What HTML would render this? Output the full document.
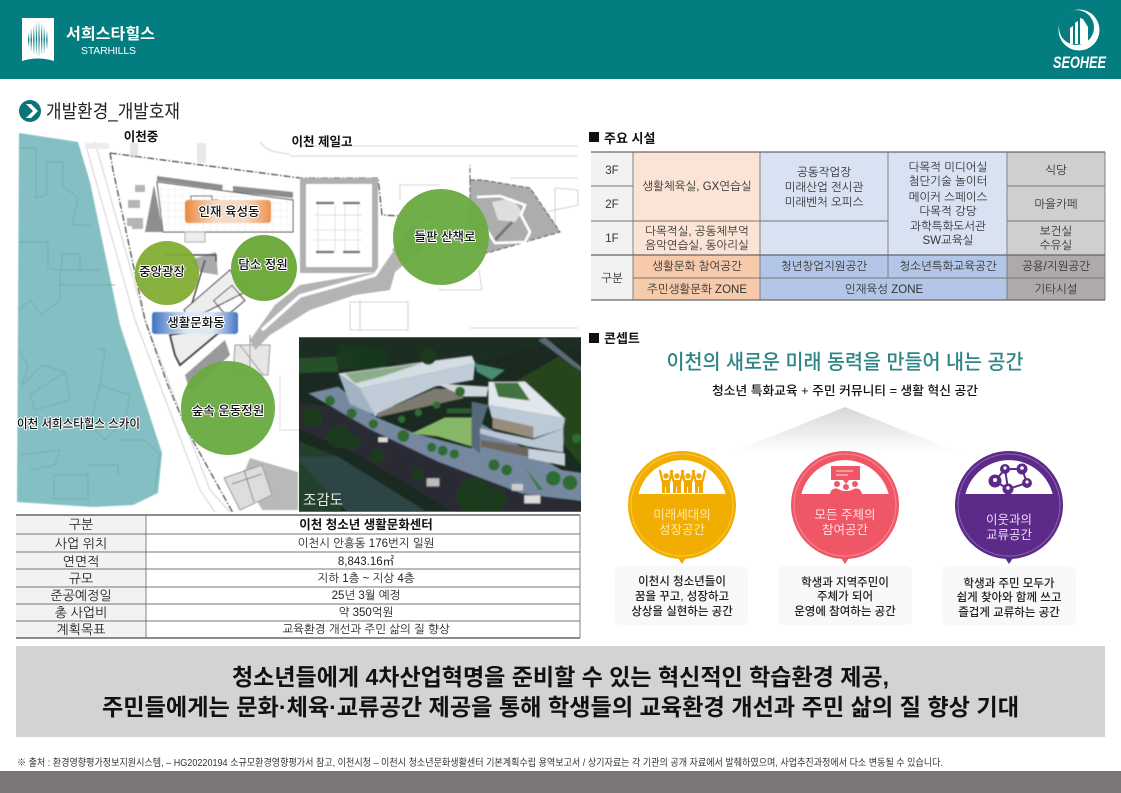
<!DOCTYPE html>
<html lang="ko"><head><meta charset="utf-8"><title>개발환경_개발호재</title>
<style>
html,body{margin:0;padding:0;background:#fff;width:1121px;height:793px;overflow:hidden}
svg{display:block;position:absolute;left:0;top:0}
text{font-family:"Liberation Sans","Noto Sans CJK KR","NanumGothic",sans-serif;fill:#222}
.m{text-anchor:middle}
.t{font-size:11.5px;fill:#333;font-family:"Liberation Sans","NanumGothic","Noto Sans CJK KR",sans-serif}
.i{font-size:11.5px;fill:#222;font-family:"Liberation Sans","NanumGothic","Noto Sans CJK KR",sans-serif}
.il{font-size:13px;fill:#222;font-family:"Liberation Sans","NanumGothic","Noto Sans CJK KR",sans-serif}
.lb{font-size:12.5px;font-weight:500;fill:#111;paint-order:stroke;stroke:#fff;stroke-width:2px;stroke-linejoin:round}
.c{font-size:11.5px;font-weight:500;fill:#222}
.w{font-size:12.5px;fill:#fff}
</style></head><body>
<svg width="1121" height="793" viewBox="0 0 1121 793" xmlns="http://www.w3.org/2000/svg">
<defs>
<linearGradient id="or" x1="0" x2="1" y1="0" y2="0"><stop offset="0" stop-color="#e98a3f"/><stop offset=".35" stop-color="#f6d9c2"/><stop offset=".7" stop-color="#f6d9c2"/><stop offset="1" stop-color="#eb9350"/></linearGradient>
<linearGradient id="bl" x1="0" x2="1" y1="0" y2="0"><stop offset="0" stop-color="#3f72c0"/><stop offset=".4" stop-color="#dde7f5"/><stop offset=".7" stop-color="#dde7f5"/><stop offset="1" stop-color="#4377c4"/></linearGradient>
<linearGradient id="tri" x1="0" x2="0" y1="0" y2="1"><stop offset="0" stop-color="#d6d6d6"/><stop offset=".85" stop-color="#fbfbfb"/><stop offset="1" stop-color="#fff"/></linearGradient>
<linearGradient id="bar" x1="0" x2="0" y1="0" y2="1"><stop offset="0" stop-color="#dff0f0"/><stop offset=".5" stop-color="#08787c"/><stop offset="1" stop-color="#dff0f0"/></linearGradient>
<pattern id="grid" width="7" height="7" patternUnits="userSpaceOnUse"><path d="M7 0H0V7" fill="none" stroke="#d8d8d8" stroke-width=".6"/></pattern>
<filter id="b1"><feGaussianBlur stdDeviation=".6"/></filter>
<filter id="b2" x="-5%" y="-5%" width="110%" height="110%"><feGaussianBlur stdDeviation="2.4"/></filter>
</defs>

<!-- header -->
<rect width="1121" height="79" fill="#047d80"/>
<path d="M22 18H54V61Q38 56 22 61Z" fill="#fff"/>
<g fill="url(#bar)">
<rect x="28" y="33" width="1.3" height="14"/><rect x="30.6" y="29" width="1.3" height="22"/><rect x="33.2" y="26" width="1.3" height="28"/><rect x="35.8" y="23" width="1.3" height="32"/><rect x="38.4" y="22" width="1.3" height="34"/><rect x="41" y="24" width="1.3" height="30"/><rect x="43.6" y="27" width="1.3" height="26"/><rect x="46.2" y="31" width="1.3" height="18"/>
</g>
<text x="66" y="39" font-size="15.5" font-weight="700" style="fill:#fff" textLength="89" lengthAdjust="spacingAndGlyphs">서희스타힐스</text>
<text x="81" y="54" font-size="10.5" style="fill:#fff" textLength="55" lengthAdjust="spacing">STARHILLS</text>

<circle cx="1079" cy="30" r="20.5" fill="#fff"/>
<circle cx="1076.5" cy="27.5" r="17.5" fill="#047d80"/>
<g fill="#fff"><path d="M1070 44V28l3-2v18z"/><path d="M1075 44V23l3-2v23z"/><path d="M1080 44V18l3 1 5 8v17z"/></g>
<text x="1053" y="68" font-size="17" font-weight="700" font-style="italic" style="fill:#fff" textLength="53" lengthAdjust="spacingAndGlyphs">SEOHEE</text>

<!-- title -->
<circle cx="30" cy="111" r="11" fill="#0a7478"/>
<path d="M26 104l7 7-7 7h5l7-7-7-7z" fill="#fff"/>
<text x="46" y="118" font-size="18.5" style="fill:#222" textLength="134" lengthAdjust="spacingAndGlyphs">개발환경_개발호재</text>

<!-- site plan -->
<g filter="url(#b1)">
<path d="M19 133L78 142L90 182L120 325L162 453L158 493L133 505L93 507L17 502Z" fill="#84bfc3"/>
<g fill="none" stroke="#6ea6ab" stroke-width=".7">
<path d="M19 148H36V198L47 195V162H63V186L78 198 72 225H90"/><path d="M19 242H48V268L62 270V254H80V270H60V300L42 315 30 300 19 310"/><path d="M62 270H100M60 285H115"/>
<path d="M98 348L105 350 100 385 130 395 125 420 105 440 90 425 100 385M30 395L65 372 70 400 35 410 30 395"/><path d="M19 455L60 450 55 465 30 470M54 475H88V499H54ZM88 465H118V475M120 440H145L160 455 155 490"/>
<path d="M19 350L28 365 22 385 42 365 65 372"/></g>
<!-- roads -->
<g fill="none" stroke="#c6c6c6" stroke-width=".8">
<path d="M85 142L135 320 200 490 215 512"/><path d="M95 142L145 320 210 490 230 512"/><path d="M300 146H578M290 156H578"/><path d="M260 142C265 150 275 153 290 154"/>
<path d="M490 512L578 440M510 512L578 455M530 512L578 470"/><path d="M510 178H578"/><path d="M470 328H578"/>
<path d="M400 200V185H440M555 188L578 190V205L555 210ZM530 215L555 210 V225L530 220Z"/>
<path d="M440 288V290H482L479 270"/><path d="M350 302H408V330H350ZM360 300V330"/>
</g>
<rect x="85" y="143" width="24" height="6" fill="#ececec"/><rect x="130" y="143" width="8" height="15" fill="#e5e5e5"/><rect x="197" y="143" width="9" height="20" fill="#e8e8e8"/>
<!-- site boundary -->
<path d="M110 153L300 178H378L382 215L440 218M110 153L113 170 145 320 167 383 187 430 233 513" fill="none" stroke="#333" stroke-width="1.1" stroke-dasharray="7 2 1.5 2"/>
<!-- dark top planter -->
<path d="M157 176L223 185L222 190L157 181ZM233 186L293 192V198L233 192Z" fill="#8d8d8d"/>
<path d="M157 182L293 200V232H163Z" fill="#fff" stroke="#444" stroke-width="1"/><path d="M157 182L293 200V232H163Z" fill="url(#grid)"/>
<path d="M154 185L163 232H145Z" fill="#8e8e8e"/>
<path d="M128 200h12v8h-12zM127 218h10v8h-10zM132 218h11v11h-11zM135 185h10v7h-10z" fill="#b5b5b5"/>
<path d="M191 196H212V218H191ZM212 200H218V212" fill="none" stroke="#444"/>
<rect x="185" y="232" width="20" height="10" fill="#eee" stroke="#aaa"/>
<path d="M190 260L216 252 218 275 200 272" fill="#aaa"/><path d="M165 255H216V262M205 260L190 310" stroke="#444" stroke-width="1.4" fill="none"/>
<path d="M184 310L230 270 245 292 190 320Z" fill="#eee" stroke="#333"/>
<rect x="217" y="290" width="24" height="20" fill="url(#grid)" stroke="#444" transform="rotate(-40 230 300)"/>
<path d="M170 335L228 325 180 365 175 355Z" fill="#eee" stroke="#444" stroke-width="2"/>
<path d="M185 375L225 340 230 355 190 392Z" fill="#999"/>
<path d="M235 345H270L268 375H233Z" fill="#e6e6e6" stroke="#999"/><path d="M240 345L263 375M250 335V370" stroke="#999" fill="none"/>
<path d="M250 458L298 472V510H262L243 475Z" fill="#b9b9b9"/>
<path d="M224 478L262 465 272 495 240 510Z" fill="#ddd" stroke="#999"/><path d="M232 484L262 474M244 470L254 502" stroke="#888" fill="none"/>
<!-- parking -->
<path d="M300 178H378V272L360 273H300Z" fill="#b0b0b0"/><rect x="306" y="184" width="66" height="83" fill="#fff"/>
<g stroke="#e1e1e1" fill="none"><path d="M318 205V252M335 205V252M345 205V252M358 205V252M314 215H362M314 230H362M314 240H362"/></g>
<path d="M316 203H334M343 203H360M316 252H334M343 252H360" stroke="#777" stroke-width="2.4"/>
<!-- landscape belt -->
<path d="M250 340L275 305 300 285 377 272 392 250 410 225 440 235 395 272 390 290 355 295 310 310 270 335 255 350Z" fill="#b3b3b3"/>
<path d="M262 330L300 296 375 275 392 250" stroke="#fff" stroke-width="3.5" fill="none"/>
<path d="M280 375V430H300" fill="none" stroke="#ddd" stroke-width="1"/>
<!-- east park -->
<path d="M470 180V165M470 180H482L530 188L560 232L487 253L470 240Z" fill="#adadad" stroke="#444" stroke-width=".9" stroke-dasharray="5 2"/>
<path d="M492 202L512 198 522 212 515 222 498 220Z" fill="#dedede"/>
<path d="M477 197L500 196 525 205 521 215 530 232 525 242 495 243 487 230" fill="none" stroke="#fff" stroke-width="2.6"/>
<path d="M495 240L512 222" stroke="#777" stroke-width="3"/>
</g>

<rect x="185" y="200" width="86" height="23" rx="3" fill="url(#or)" filter="url(#b1)"/>
<rect x="152" y="312" width="86" height="22" rx="3" fill="url(#bl)" filter="url(#b1)"/>
<circle cx="167" cy="273" r="32" fill="#7fab2e" opacity=".93"/>
<circle cx="264" cy="268" r="33" fill="#6ba83a" opacity=".97"/>
<circle cx="441" cy="237" r="48" fill="#6aab43" opacity=".96"/>
<circle cx="228" cy="408" r="47" fill="#6aab43" opacity=".96"/>
<text class="lb m" x="229" y="216">인재 육성동</text>
<text class="lb m" x="196" y="327">생활문화동</text>
<text class="lb m" x="162" y="276">중앙광장</text>
<text class="lb m" x="263" y="269">담소 정원</text>
<text class="lb m" x="445" y="241">들판 산책로</text>
<text class="lb m" x="228" y="415">숲속 운동정원</text>
<text class="lb" x="17" y="428" textLength="123" lengthAdjust="spacingAndGlyphs">이천 서희스타힐스 스카이</text>
<text class="m" x="141" y="141" font-size="12.5" font-weight="700" style="fill:#111">이천중</text>
<text class="m" x="322" y="146" font-size="12.5" font-weight="700" style="fill:#111">이천 제일고</text>

<!-- rendering -->
<g transform="translate(295 330) scale(.33333)">
<rect x="12" y="22" width="846" height="523" fill="#1a2a20"/>
<svg x="12" y="22" width="846" height="523" viewBox="12 22 846 523">
<g filter="url(#b2)">
<path d="M-10 0H880V75L780 40 680 60 540 100 300 100 -10 90Z" fill="#1a2e20"/>
<path d="M0 85L130 80 130 125 0 130Z" fill="#264f2c"/>
<path d="M130 45L280 60 270 110 140 120Z" fill="#17391f"/>
<path d="M750 22L870 120V135L730 30Z" fill="#5a6a78"/>
<path d="M670 150L790 80 870 130V420L805 340 810 260Z" fill="#27441f"/>
<path d="M0 330L130 380 140 560H0Z" fill="#22402a"/>
<path d="M0 380L130 380 420 560H170Z" fill="#2f4444"/>
<path d="M0 215V290L200 380 500 560H870V525L620 465 330 340 100 230Z" fill="#2a2c34"/>
<path d="M40 190L130 170 240 260 360 310 530 355 540 270 800 420 870 430V515L680 490 430 395 230 300Z" fill="#7488a0"/>
<path d="M130 130L530 78 540 100 195 175Z" fill="#d5dde4"/>
<path d="M150 130L380 100 260 140 180 160Z" fill="#8bae89"/>
<path d="M195 175L540 100 535 150 420 170 300 225 240 260 210 215Z" fill="#c0ccd8"/>
<path d="M130 130L195 175 240 255 165 222Z" fill="#a3b3c3"/>
<path d="M245 250L420 175 510 180 505 205 370 235 250 262Z" fill="#7d7a70"/>
<path d="M420 160L580 170 575 200 510 200Z" fill="#d0d7dc"/>
<path d="M540 100L630 120 590 150 545 125Z" fill="#4a8a72"/>
<path d="M580 155L690 155 810 265 580 225Z" fill="#e1e7ec"/>
<path d="M597 158L668 158 705 212 610 200Z" fill="#3f733e"/>
<path d="M580 225L810 265 805 295 715 325 590 262Z" fill="#bccad6"/>
<path d="M592 262L715 290 715 325 592 295Z" fill="#9a8c7c"/>
<path d="M555 295L715 328 805 295 805 368 700 350 555 310Z" fill="#b9c7d4"/>
<path d="M558 330L700 352 700 380 558 350Z" fill="#6d655c"/>
<path d="M700 355L810 370 810 408 700 385Z" fill="#c6d1db"/>
<path d="M530 215L580 225 555 300V370L530 350Z" fill="#56687a"/>
<path d="M350 310L450 262 530 262 530 350 430 320Z" fill="#86b868"/>
<path d="M455 235H528V250H455Z" fill="#2c5c2e"/>
<path d="M680 400L745 480 730 480 695 420Z" fill="#3b7a40"/>
<g fill="#1a3a1f">
<circle cx="52" cy="262" r="30"/><circle cx="130" cy="320" r="34"/><circle cx="170" cy="335" r="24"/><circle cx="245" cy="378" r="20"/><circle cx="367" cy="432" r="18"/><circle cx="540" cy="500" r="55"/><circle cx="600" cy="510" r="35"/><circle cx="400" cy="80" r="24"/><circle cx="150" cy="90" r="26"/>
</g>
<g fill="#2f6c33"><circle cx="235" cy="282" r="14"/><circle cx="170" cy="250" r="15"/><circle cx="105" cy="212" r="15"/><circle cx="410" cy="352" r="14"/><circle cx="443" cy="362" r="15"/><circle cx="478" cy="372" r="14"/><circle cx="597" cy="405" r="17"/><circle cx="635" cy="420" r="16"/><circle cx="775" cy="445" r="22"/><circle cx="825" cy="458" r="22"/><circle cx="320" cy="268" r="11"/><circle cx="370" cy="248" r="11"/><circle cx="425" cy="225" r="11"/><circle cx="495" cy="185" r="15"/><circle cx="325" cy="318" r="18"/><circle cx="845" cy="325" r="14"/></g>
<rect x="250" y="322" width="28" height="14" fill="#ddd"/><rect x="395" y="445" width="38" height="24" fill="#bbb"/><rect x="688" y="496" width="48" height="24" fill="#ddd"/><rect x="650" y="462" width="34" height="20" fill="#ccc"/>
</g>
</svg>
</g>
<text x="303" y="505" font-size="14.5" style="fill:#e8e8e8">조감도</text>

<!-- info table -->
<rect x="16" y="515" width="130" height="123" fill="#f2f2f2"/>
<rect x="146" y="515" width="434" height="123" fill="#fff"/>
<path d="M16 515H580M16 638H580" stroke="#666" stroke-width="1.4"/>
<path d="M16 534H580M16 552H580M16 569H580M16 587H580M16 604H580M16 621H580" stroke="#777" stroke-width=".9"/>
<path d="M146 515V638M580 515V638" stroke="#777" stroke-width=".9"/>
<text class="il m" x="81" y="529">구분</text><text class="il m" x="81" y="548">사업 위치</text><text class="il m" x="81" y="566">연면적</text><text class="il m" x="81" y="583">규모</text><text class="il m" x="81" y="600">준공예정일</text><text class="il m" x="81" y="617">총 사업비</text><text class="il m" x="81" y="634">계획목표</text>
<text class="m" x="366" y="529" font-size="12.5" font-weight="700" style="fill:#111">이천 청소년 생활문화센터</text>
<text class="i m" x="366" y="547">이천시 안흥동 176번지 일원</text><text class="i m" x="366" y="565">8,843.16㎡</text><text class="i m" x="366" y="582">지하 1층 ~ 지상 4층</text><text class="i m" x="366" y="599">25년 3월 예정</text><text class="i m" x="366" y="616">약 350억원</text><text class="i m" x="366" y="633">교육환경 개선과 주민 삶의 질 향상</text>

<!-- facilities -->
<rect x="589" y="132" width="10" height="10" fill="#111"/>
<text x="604" y="143" font-size="13" font-weight="700" style="fill:#111">주요 시설</text>
<rect x="591" y="152" width="42" height="148" fill="#f2f2f2"/>
<rect x="633" y="152" width="127" height="103" fill="#fbe4d5"/>
<rect x="633" y="255" width="127" height="45" fill="#f7caac"/>
<rect x="760" y="152" width="247" height="103" fill="#d9e2f3"/>
<rect x="760" y="255" width="247" height="45" fill="#b4c6e7"/>
<rect x="1007" y="152" width="98" height="103" fill="#d0cece"/>
<rect x="1007" y="255" width="98" height="45" fill="#aeaaaa"/>
<g stroke="#777" stroke-width=".9" fill="none">
<path d="M591 186H633M1007 186H1105M591 221H888M1007 221H1105M633 278H1105"/>
<path d="M633 152V300M760 152V300M888 152V278M1007 152V300M1105 152V300"/>
</g>
<path d="M591 152H1105M591 300H1105M591 255H1105" stroke="#666" stroke-width="1.3"/>
<text class="t m" x="612" y="174">3F</text><text class="t m" x="612" y="208">2F</text><text class="t m" x="612" y="242">1F</text><text class="t m" x="612" y="282">구분</text>
<text class="t m" x="697" y="190">생활체육실, GX연습실</text>
<text class="t m" x="697" y="235">다목적실, 공동체부억</text><text class="t m" x="697" y="249">음악연습실, 동아리실</text>
<text class="t m" x="697" y="270">생활문화 참여공간</text><text class="t m" x="697" y="293">주민생활문화 ZONE</text>
<text class="t m" x="824" y="176">공동작업장</text><text class="t m" x="824" y="191">미래산업 전시관</text><text class="t m" x="824" y="206">미래벤처 오피스</text>
<text class="t m" x="948" y="171">다목적 미디어실</text><text class="t m" x="948" y="185">첨단기술 놀이터</text><text class="t m" x="948" y="201">메이커 스페이스</text><text class="t m" x="948" y="215">다목적 강당</text><text class="t m" x="948" y="230">과학특화도서관</text><text class="t m" x="948" y="244">SW교육실</text>
<text class="t m" x="824" y="270">청년창업지원공간</text><text class="t m" x="948" y="270">청소년특화교육공간</text>
<text class="t m" x="884" y="293">인재육성 ZONE</text>
<text class="t m" x="1056" y="174">식당</text><text class="t m" x="1056" y="208">마을카페</text><text class="t m" x="1056" y="235">보건실</text><text class="t m" x="1056" y="249">수유실</text><text class="t m" x="1056" y="270">공용/지원공간</text><text class="t m" x="1056" y="293">기타시설</text>

<!-- concept -->
<rect x="589" y="333" width="10" height="10" fill="#111"/>
<text x="604" y="343" font-size="13" font-weight="700" style="fill:#111">콘셉트</text>
<text class="m" x="845" y="369" font-size="20.5" font-weight="500" style="fill:#2f8488" textLength="357" lengthAdjust="spacingAndGlyphs">이천의 새로운 미래 동력을 만들어 내는 공간</text>
<text class="m" x="845" y="395" font-size="12.5" font-weight="500" style="fill:#111" textLength="266" lengthAdjust="spacingAndGlyphs">청소년 특화교육 + 주민 커뮤니티 = 생활 혁신 공간</text>
<path d="M845 407L965 455H725Z" fill="url(#tri)"/>

<!-- yellow -->
<path d="M678 558L682 564 686 558Z" fill="#f0a800"/>
<circle cx="682" cy="505" r="54" fill="#f1ad00"/><circle cx="682" cy="505" r="51" fill="none" stroke="#f7c94a" stroke-width="1"/>
<path d="M638.4 494A45 45 0 0 1 725.6 494Z" fill="#fff"/>
<g fill="#f1a800">
<path d="M662 480H670V493H662Z"/><path d="M673 480H681V493H673Z"/><path d="M684 480H692V493H684Z"/><path d="M695 480H703V493H695Z"/>
<circle cx="666" cy="476" r="2.7"/><circle cx="677" cy="476" r="2.7"/><circle cx="688" cy="476" r="2.7"/><circle cx="699" cy="476" r="2.7"/>
</g>
<g fill="none" stroke="#f1a800" stroke-width="2.4" stroke-linecap="round"><path d="M660 471L662.5 481M672 471L669.5 481M671 471L673.5 481M683 471L680.5 481M682 471L684.5 481M694 471L691.5 481M693 471L695.5 481M705 471L702.5 481"/></g>
<path d="M665.5 487V493M676.5 487V493M687.5 487V493M698.5 487V493" stroke="#fff" stroke-width=".9"/>
<text class="w m" x="682" y="519" style="fill:#fde8b3">미래세대의</text><text class="w m" x="682" y="534" style="fill:#fde8b3">성장공간</text>

<!-- red -->
<path d="M841 558L845 564 849 558Z" fill="#ef5a66"/>
<circle cx="845" cy="505" r="54" fill="#ef5766"/><circle cx="845" cy="505" r="51" fill="none" stroke="#f58a93" stroke-width="1"/>
<path d="M801.4 494A45 45 0 0 1 888.6 494Z" fill="#fff"/>
<path d="M831 466H860V480H849L846 484 843 480H831Z" fill="#ef5766"/><path d="M836 471H853M836 475H848" stroke="#fff" stroke-width=".8"/>
<g fill="#ef5766"><circle cx="837" cy="484" r="3"/><circle cx="846" cy="487" r="3"/><circle cx="855" cy="484" r="3"/><path d="M830 494C831 488 836 488 838 489 840 490 842 491 846 491S852 490 854 489C856 488 861 488 862 494Z"/></g>
<text class="w m" x="845" y="519" style="fill:#fde0e3">모든 주체의</text><text class="w m" x="845" y="534" style="fill:#fde0e3">참여공간</text>

<!-- purple -->
<path d="M1005 558L1009 564 1013 558Z" fill="#5d2c8b"/>
<circle cx="1009" cy="505" r="54" fill="#5c2b8a"/><circle cx="1009" cy="505" r="51" fill="none" stroke="#8a62ad" stroke-width="1"/>
<path d="M965.4 494A45 45 0 0 1 1052.6 494Z" fill="#fff"/>
<g fill="none" stroke="#5c2b8a" stroke-width="2"><path d="M995 481L1005 469 1022 469 1027 483 1008 489 995 481M1005 469L1008 489"/></g>
<g fill="#5c2b8a"><circle cx="995" cy="481" r="6.5"/><circle cx="1005" cy="469" r="5"/><circle cx="1022" cy="469" r="5.5"/><circle cx="1027" cy="483" r="5"/><circle cx="1008" cy="489" r="5.5"/></g>
<g fill="#fff"><circle cx="995" cy="480" r="2"/><circle cx="1005" cy="468" r="1.6"/><circle cx="1022" cy="468" r="1.8"/><circle cx="1027" cy="482" r="1.6"/><circle cx="1008" cy="488" r="1.8"/></g>
<text class="w m" x="1009" y="524" style="fill:#e8ddf1">이웃과의</text><text class="w m" x="1009" y="539" style="fill:#e8ddf1">교류공간</text>

<rect x="615" y="566" width="133" height="59" rx="6" fill="#f8f8f8"/>
<rect x="778" y="566" width="134" height="59" rx="6" fill="#f8f8f8"/>
<rect x="942" y="566" width="134" height="59" rx="6" fill="#f8f8f8"/>
<text class="c m" x="682" y="585">이천시 청소년들이</text><text class="c m" x="682" y="600">꿈을 꾸고, 성장하고</text><text class="c m" x="682" y="615">상상을 실현하는 공간</text>
<text class="c m" x="845" y="586">학생과 지역주민이</text><text class="c m" x="845" y="600">주체가 되어</text><text class="c m" x="845" y="615">운영에 참여하는 공간</text>
<text class="c m" x="1009" y="587">학생과 주민 모두가</text><text class="c m" x="1009" y="601">쉽게 찾아와 함께 쓰고</text><text class="c m" x="1009" y="616">즐겁게 교류하는 공간</text>

<!-- bottom band -->
<rect x="16" y="646" width="1089" height="91" fill="#d1d4d3"/>
<text class="m" x="560.5" y="685" font-size="23" font-weight="700" style="fill:#111" textLength="657" lengthAdjust="spacingAndGlyphs">청소년들에게 4차산업혁명을 준비할 수 있는 혁신적인 학습환경 제공,</text>
<text class="m" x="560.5" y="715" font-size="23" font-weight="700" style="fill:#111" textLength="917" lengthAdjust="spacingAndGlyphs">주민들에게는 문화·체육·교류공간 제공을 통해 학생들의 교육환경 개선과 주민 삶의 질 향상 기대</text>

<text x="17" y="766" font-size="10" style="fill:#333" textLength="926" lengthAdjust="spacingAndGlyphs">※ 출처 : 환경영향평가정보지원시스템, – HG20220194 소규모환경영향평가서 참고, 이천시청 – 이천시 청소년문화생활센터 기본계획수립 용역보고서 / 상기자료는 각 기관의 공개 자료에서 발췌하였으며, 사업추진과정에서 다소 변동될 수 있습니다.</text>
<rect y="771" width="1121" height="22" fill="#7b7776"/>
</svg>
</body></html>
